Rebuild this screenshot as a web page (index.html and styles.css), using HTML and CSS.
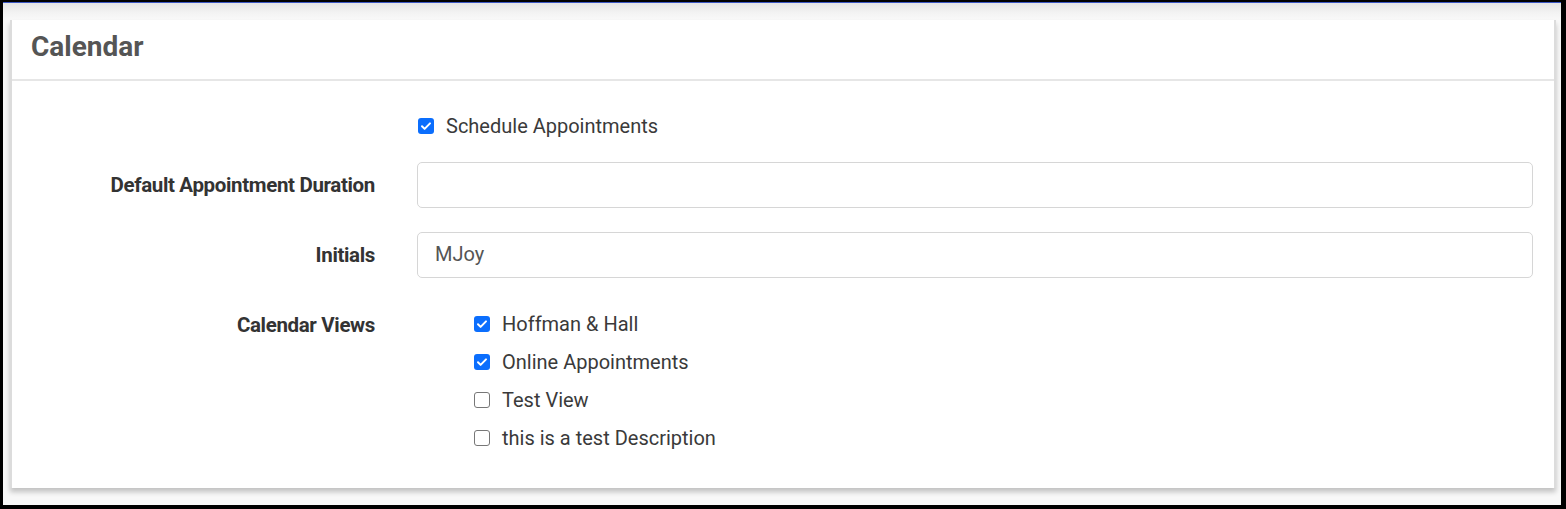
FILE: index.html
```html
<!DOCTYPE html>
<html>
<head>
<meta charset="utf-8">
<link rel="stylesheet" href="styles.css">
</head>
<body>
<div class="frame">
  <div class="stage">
    <div class="card">
      <div class="card-header">Calendar</div>
      <div class="card-body">
        <div class="label"></div>
        <div class="field">
          <label class="check">
            <span class="box checked"><svg viewBox="0 0 16 16" width="16" height="16"><path d="M4 8.3l2.6 2.6L12 5.4" fill="none" stroke="#fff" stroke-width="2" stroke-linecap="round" stroke-linejoin="round"/></svg></span>
            <span class="check-text">Schedule Appointments</span>
          </label>
        </div>

        <div class="label row-input">Default Appointment Duration</div>
        <div class="field row-input"><div class="input"></div></div>

        <div class="label row-input">Initials</div>
        <div class="field row-input"><div class="input">MJoy</div></div>

        <div class="label views-label">Calendar Views</div>
        <div class="field views">
          <label class="check view">
            <span class="box checked"><svg viewBox="0 0 16 16" width="16" height="16"><path d="M4 8.3l2.6 2.6L12 5.4" fill="none" stroke="#fff" stroke-width="2" stroke-linecap="round" stroke-linejoin="round"/></svg></span>
            <span class="check-text">Hoffman &amp; Hall</span>
          </label>
          <label class="check view">
            <span class="box checked"><svg viewBox="0 0 16 16" width="16" height="16"><path d="M4 8.3l2.6 2.6L12 5.4" fill="none" stroke="#fff" stroke-width="2" stroke-linecap="round" stroke-linejoin="round"/></svg></span>
            <span class="check-text">Online Appointments</span>
          </label>
          <label class="check view">
            <span class="box"></span>
            <span class="check-text">Test View</span>
          </label>
          <label class="check view">
            <span class="box"></span>
            <span class="check-text">this is a test Description</span>
          </label>
        </div>
      </div>
    </div>
  </div>
</div>
</body>
</html>
```
FILE: styles.css
```css
* { box-sizing: border-box; }
html, body { margin: 0; padding: 0; }
body {
  width: 1566px;
  height: 509px;
  font-family: Roboto, "Liberation Sans", sans-serif;
  background: #fff;
}
.frame {
  width: 1566px;
  height: 509px;
  border-style: solid;
  border-color: #000;
  border-width: 2px 5px 4px 3px;
}
.stage {
  height: 100%;
  border-top: 1px solid #3b57c4;
  background: linear-gradient(#e4e4e4 0px, #f3f3f3 10px, #f8f8f8 16px, #f8f8f8 100%);
  padding: 17px 2px 0 7px;
}
.card {
  width: 1546px;
  height: 468px;
  background: #fff;
  border-left: 2px solid #dcdcdc;
  border-right: 2px solid #dcdcdc;
  box-shadow: 0 4px 5px rgba(0,0,0,0.22);
}
.card-header {
  height: 61px;
  border-bottom: 2px solid #e6e6e6;
  padding: 11px 0 0 19px;
  font-size: 28px;
  font-weight: 700;
  color: #555;
  line-height: 32px;
}
.card-body {
  display: grid;
  grid-template-columns: 363px 1fr;
  column-gap: 42px;
  padding: 33px 21px 0 0;
  align-items: start;
}
.label {
  text-align: right;
  font-size: 20.5px;
  font-weight: 700;
  color: #333;
  letter-spacing: -0.35px;
}
.row-input.label { line-height: 46px; }
.field { min-width: 0; }
.check {
  display: flex;
  align-items: center;
  height: 24px;
  gap: 12px;
  padding-left: 1px;
}
.box {
  width: 16px;
  height: 16px;
  border: 1.5px solid #777;
  border-radius: 3px;
  background: #fff;
  flex: none;
  display: block;
}
.box.checked {
  background: #0b6efd;
  border: none;
}
.box svg { display: block; }
.check-text {
  font-size: 20px;
  color: #3a3a3a;
}
.row-input { margin-top: 24px; }
.input {
  height: 46px;
  border: 1.5px solid #d6d6d6;
  border-radius: 5px;
  padding: 0 17px;
  line-height: 43px;
  font-size: 20px;
  color: #555;
}
.views-label {
  margin-top: 35px;
  line-height: 24px;
}
.views {
  margin-top: 34px;
  padding-left: 56px;
  display: flex;
  flex-direction: column;
  gap: 14px;
}
```
